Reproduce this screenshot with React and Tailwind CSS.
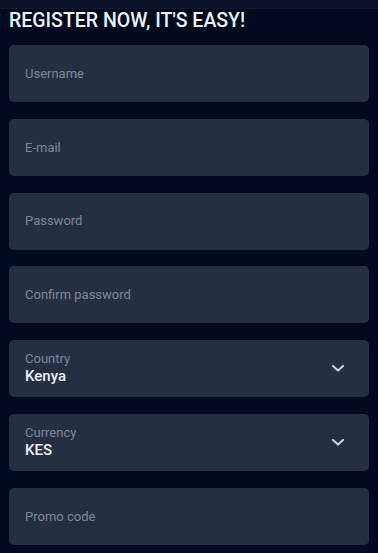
import React from "react";

function Chevron() {
  return (
    <svg width="14" height="9" viewBox="0 0 14 9" fill="none" className="shrink-0">
      <path d="M2 2l5 4.5L12 2" stroke="#c9ced8" strokeWidth="2.2" strokeLinecap="round" strokeLinejoin="round" />
    </svg>
  );
}

function Field({ label }) {
  return (
    <div className="h-[57px] rounded-[5px] bg-[#252f42] flex items-center px-4">
      <span className="text-[13px] text-[#7f8796]">{label}</span>
    </div>
  );
}

function Select({ label, value }) {
  return (
    <div className="h-[57px] rounded-[5px] bg-[#252f42] flex items-center pl-4 pr-[24px]">
      <div className="flex-1 flex flex-col justify-center">
        <span className="text-[13px] leading-[16px] text-[#7f8796]">{label}</span>
        <span className="text-[15px] leading-[19px] font-medium text-[#eef1f6]">{value}</span>
      </div>
      <Chevron />
    </div>
  );
}

export default function App() {
  return (
    <div
      className="w-[378px] h-[553px] bg-[#010a1f] overflow-hidden"
      style={{ fontFamily: "Roboto, 'Liberation Sans', sans-serif" }}
    >
      <div className="h-[9px] bg-[#071026] border-b border-[#0f1a30]" />
      <div className="px-[9px]">
        <h1 className="text-[19.5px] leading-[22px] font-medium text-[#eef2f8] pt-[1px]">
          REGISTER NOW, IT'S EASY!
        </h1>
        <div className="mt-[13px] flex flex-col gap-[16.8px]">
          <Field label="Username" />
          <Field label="E-mail" />
          <Field label="Password" />
          <Field label="Confirm password" />
          <Select label="Country" value="Kenya" />
          <Select label="Currency" value="KES" />
          <Field label="Promo code" />
        </div>
      </div>
    </div>
  );
}
